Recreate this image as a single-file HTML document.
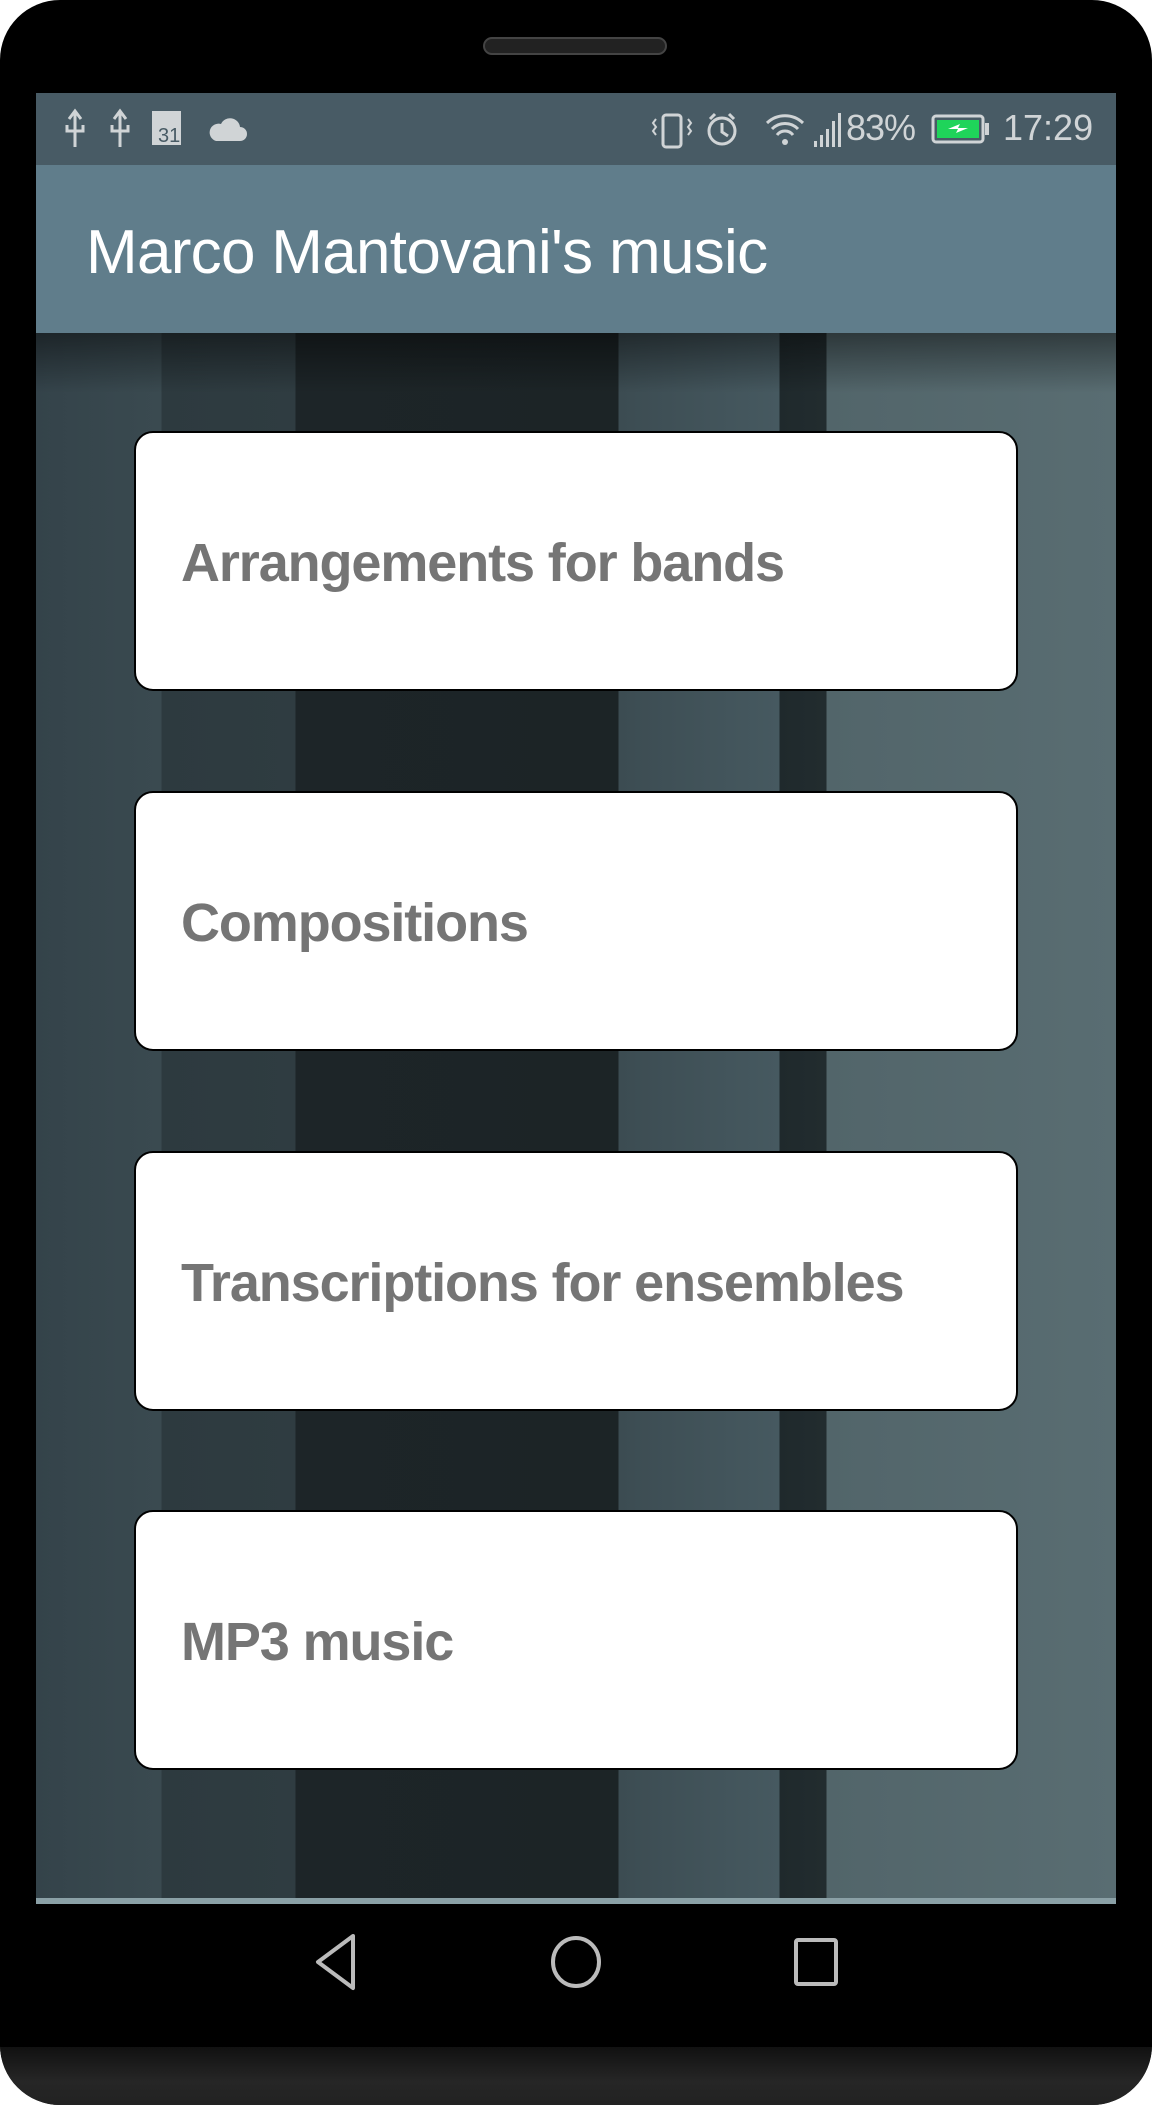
<!DOCTYPE html>
<html><head><meta charset="utf-8"><style>
html,body{margin:0;padding:0;background:#fff;}
body{width:1152px;height:2105px;position:relative;overflow:hidden;font-family:"Liberation Sans",sans-serif;}
.phone{position:absolute;left:0;top:0;width:1152px;height:2105px;background:#000;border-radius:60px;overflow:hidden;}
.bezelbot{position:absolute;left:0;top:2047px;width:1152px;height:58px;background:linear-gradient(#111,#262626 60%,#222);}
.speaker{position:absolute;left:483px;top:37px;width:184px;height:18px;border-radius:9px;background:#222;border:2px solid #444;box-sizing:border-box;}
.screen{position:absolute;left:36px;top:93px;width:1080px;height:1811px;overflow:hidden;}
.status{position:absolute;left:0;top:0;width:1080px;height:72px;background:#485b65;color:#d0d4d6;}
.appbar{position:absolute;left:0;top:72px;width:1080px;height:168px;background:#607d8b;}
.appbar h1{margin:0;position:absolute;left:50px;top:52px;font-size:62px;font-weight:normal;color:#fff;letter-spacing:-0.7px;}
.content{position:absolute;left:0;top:240px;width:1080px;height:1571px;
background:linear-gradient(90deg,#34434a 0,#3a4a50 125px,#2d3a3f 126px,#2f3c41 259px,#1d2528 260px,#1c2426 582px,#3c4c52 583px,#465960 743px,#1f292c 744px,#222c2f 790px,#52656a 791px,#596d72 1080px);}
.shade{position:absolute;left:0;top:0;width:1080px;height:60px;background:linear-gradient(rgba(0,0,0,.45),rgba(0,0,0,0));}
.bline{position:absolute;left:0;top:1565px;width:1080px;height:6px;background:#8aa0a6;}
.card{position:absolute;left:98px;width:884px;height:260px;background:#fff;border:2px solid #000;border-radius:19px;box-sizing:border-box;}
.card span{position:absolute;left:45px;top:98px;font-size:54px;font-weight:bold;color:#757575;letter-spacing:-1.1px;line-height:64px;}
.nav{position:absolute;left:0;top:1904px;width:1152px;height:143px;background:#000;}
</style></head><body>
<div class="phone">
<div class="speaker"></div>
<div class="screen">
 <div class="status">
  <svg width="1080" height="72" style="position:absolute;left:0;top:0">
   <g fill="#d0d4d6" stroke="#d0d4d6">
    <path d="M39 18v36M33 26l6-8 6 8M31 32v6h16v-6" stroke-width="3" fill="none"/>
    <path d="M84 18v36M78 26l6-8 6 8M76 32v6h16v-6" stroke-width="3" fill="none"/>
    <rect x="116" y="18" width="29" height="34" stroke="none"/>
    <path d="M180 48h24a7 7 0 0 0 0-14 10 10 0 0 0-19-3 8 8 0 0 0-5 17z" stroke="none"/>
    <rect x="627" y="22" width="18" height="32" rx="3" fill="none" stroke-width="3"/>
    <path d="M620 26l-3 4 3 4-3 4 3 4M652 26l3 4-3 4 3 4-3 4" fill="none" stroke-width="2"/>
    <circle cx="686" cy="38" r="13" fill="none" stroke-width="3"/>
    <path d="M686 30v9l6 4M674 26l5-5M698 26l-5-5" fill="none" stroke-width="3"/>
    <path d="M731 30a26 26 0 0 1 36 0M736 36a18 18 0 0 1 26 0M741 42a10 10 0 0 1 16 0" fill="none" stroke-width="3"/>
    <circle cx="749" cy="49" r="3" stroke="none"/>
    <rect x="778" y="48" width="3" height="6" stroke="none"/><rect x="784" y="42" width="3" height="12" stroke="none"/><rect x="790" y="36" width="3" height="18" stroke="none"/><rect x="796" y="28" width="3" height="26" stroke="none"/><rect x="802" y="20" width="3" height="34" stroke="none"/>
    <rect x="897" y="23" width="50" height="26" rx="3" fill="none" stroke-width="3"/>
    <rect x="949" y="30" width="4" height="12" stroke="none"/>
   </g>
   <rect x="901" y="27" width="42" height="18" fill="#1fd45a"/>
   <path d="M912 36l12-5-2 4 10 0-12 5 2-4z" fill="#fff"/>
   <text x="122" y="49" font-size="20" fill="#485b65" font-family="Liberation Sans">31</text>
  </svg>
  <div style="position:absolute;left:810px;top:14px;font-size:36px;letter-spacing:-1px;">83%</div>
  <div style="position:absolute;left:967px;top:14px;font-size:36px;">17:29</div>
 </div>
 <div class="appbar"><h1>Marco Mantovani's music</h1></div>
 <div class="content">
  <div class="shade"></div>
  <div class="card" style="top:98px"><span>Arrangements for bands</span></div>
  <div class="card" style="top:458px"><span>Compositions</span></div>
  <div class="card" style="top:818px"><span>Transcriptions for ensembles</span></div>
  <div class="card" style="top:1177px"><span>MP3 music</span></div>
  <div class="bline"></div>
 </div>
</div>
<div class="nav">
 <svg width="1152" height="143">
  <path d="M353 32L318 58l35 26z" fill="none" stroke="#bbb" stroke-width="4" stroke-linejoin="round"/>
  <ellipse cx="576" cy="58" rx="23" ry="24" fill="none" stroke="#bbb" stroke-width="4"/>
  <rect x="796" y="36" width="40" height="44" rx="2" fill="none" stroke="#bbb" stroke-width="4"/>
 </svg>
</div>
<div class="bezelbot"></div>
</div>
</body></html>
